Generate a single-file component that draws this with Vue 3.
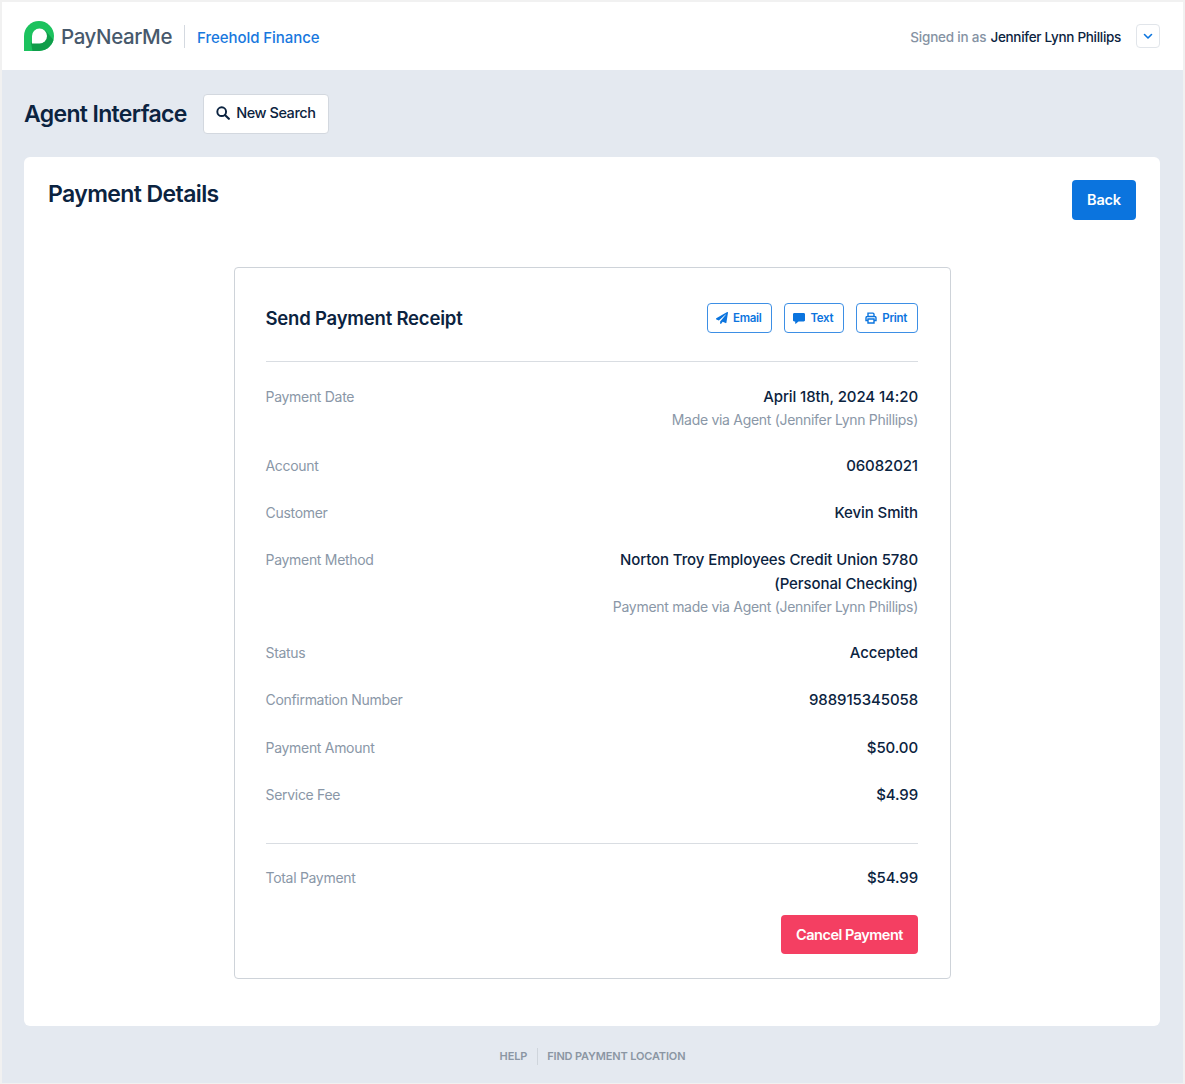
<script setup>
const rows = [
  { label: 'Payment Date', value: ['April 18th, 2024 14:20'], note: 'Made via Agent (Jennifer Lynn Phillips)' },
  { label: 'Account', value: ['06082021'] },
  { label: 'Customer', value: ['Kevin Smith'] },
  {
    label: 'Payment Method',
    value: ['Norton Troy Employees Credit Union 5780', '(Personal Checking)'],
    note: 'Payment made via Agent (Jennifer Lynn Phillips)'
  },
  { label: 'Status', value: ['Accepted'] },
  { label: 'Confirmation Number', value: ['988915345058'] },
  { label: 'Payment Amount', value: ['$50.00'] },
  { label: 'Service Fee', value: ['$4.99'] }
]
</script>

<template>
  <div class="page">
    <header class="topbar">
      <div class="brand">
        <svg class="logo" viewBox="0 0 30 30" width="30" height="30">
          <path d="M15 0a15 15 0 0 1 0 30H0V15A15 15 0 0 1 15 0z" fill="#1cc25e" />
          <path d="M21 9 29.500 19A15 15 0 0 1 15 30H8.500L7 22z" fill="#0f9d4a" />
          <path d="M15.500 7.500a7.500 7.500 0 0 1 0 15H8V15a7.500 7.500 0 0 1 7.500-7.500z" fill="#fff" />
        </svg>
        <span class="brand-name">PayNearMe</span>
        <span class="brand-sep"></span>
        <span class="merchant">Freehold Finance</span>
      </div>
      <div class="user">
        <span class="signed">Signed in as</span>
        <span class="user-name">Jennifer Lynn Phillips</span>
        <button class="user-toggle">
          <svg viewBox="0 0 12 12" width="12" height="12">
            <path d="M2.500 4.500 6 8l3.500-3.500" fill="none" stroke="#0b74de" stroke-width="1.600" stroke-linecap="round" stroke-linejoin="round" />
          </svg>
        </button>
      </div>
    </header>

    <div class="subbar">
      <h1>Agent Interface</h1>
      <button class="search-btn">
        <svg viewBox="0 0 16 16" width="14" height="14">
          <circle cx="6.500" cy="6.500" r="5" fill="none" stroke="#0b2340" stroke-width="2.200" />
          <path d="m10.500 10.500 4.200 4.200" stroke="#0b2340" stroke-width="2.400" stroke-linecap="round" />
        </svg>
        New Search
      </button>
    </div>

    <main class="panel">
      <div class="panel-head">
        <h2>Payment Details</h2>
        <button class="back-btn">Back</button>
      </div>

      <section class="receipt">
        <div class="receipt-head">
          <h3>Send Payment Receipt</h3>
          <div class="receipt-actions">
            <button class="action">
              <svg viewBox="0 0 512 512" width="12" height="12">
                <path fill="#0b74de" d="M476 3 12 271c-18 10-16 36 3 44l107 45 288-254c6-5 13 3 9 8L177 402v81c0 24 29 33 43 16l64-78 126 53c14 6 31-3 33-19L511 28c3-21-17-36-35-25z" />
              </svg>
              Email
            </button>
            <button class="action">
              <svg viewBox="0 0 12 12" width="12" height="12">
                <path fill="#0b74de" d="M1.300 1h9.400c.7 0 1.300.6 1.300 1.300v6c0 .7-.6 1.200-1.300 1.200H5.500L2.800 11.700c-.3.2-.6 0-.6-.3V9.500h-.9C.6 9.500 0 9 0 8.300v-6C0 1.600.6 1 1.300 1z" />
              </svg>
              Text
            </button>
            <button class="action">
              <svg viewBox="0 0 12 12" width="12" height="12">
                <path fill="none" stroke="#0b74de" stroke-width="1.400" d="M3 4.500V1.100h5l1 1v2.400M3 8.500H1V5.800c0-.7.6-1.300 1.300-1.300h7.400c.7 0 1.300.6 1.300 1.300v2.700H9M3 7h6v4H3z" />
              </svg>
              Print
            </button>
          </div>
        </div>

        <dl class="details">
          <div v-for="row in rows" :key="row.label" class="row">
            <dt>{{ row.label }}</dt>
            <dd>
              <span v-for="line in row.value" :key="line" class="value">{{ line }}</span>
              <span v-if="row.note" class="note">{{ row.note }}</span>
            </dd>
          </div>
        </dl>

        <div class="total">
          <span class="total-label">Total Payment</span>
          <span class="value">$54.99</span>
        </div>

        <div class="receipt-foot">
          <button class="cancel-btn">Cancel Payment</button>
        </div>
      </section>
    </main>

    <footer class="foot">
      <a>HELP</a>
      <span class="foot-sep"></span>
      <a>FIND PAYMENT LOCATION</a>
    </footer>
  </div>
</template>

<style>
html,
body {
  margin: 0;
  background: #fff;
}
</style>

<style scoped>
.page {
  box-sizing: border-box;
  width: 1185px;
  height: 1084px;
  border: 2px solid #f1f1f1;
  border-bottom-width: 1px;
  background: #e4e9f0;
  font-family: Inter, "Open Sans", sans-serif;
  color: #0b2340;
  overflow: hidden;
}

button {
  font-family: inherit;
  cursor: pointer;
}

.topbar {
  height: 68px;
  background: #fff;
  display: flex;
  align-items: center;
  justify-content: space-between;
  padding: 0 22px;
}

.brand {
  display: flex;
  align-items: center;
}

.brand-name {
  margin-left: 7px;
  font-size: 20.500px;
  font-weight: 500;
  color: #47596c;
  letter-spacing: -0.4px;
}

.brand-sep {
  width: 1px;
  height: 23px;
  background: #d4d9e0;
  margin: 0 12px;
}

.merchant {
  margin-top: 2px;
  font-size: 15px;
  font-weight: 500;
  letter-spacing: -0.05px;
  color: #1878de;
}

.user {
  display: flex;
  align-items: center;
  font-size: 13.500px;
}

.signed {
  padding-top: 2px;
  color: #8592a3;
  font-weight: 500;
  letter-spacing: -0.2px;
}

.user-name {
  padding-top: 2px;
  margin-left: 4px;
  font-weight: 500;
  letter-spacing: -0.3px;
}

.user-toggle {
  width: 24px;
  height: 24px;
  margin: 0 1px 0 15px;
  padding: 0;
  display: flex;
  align-items: center;
  justify-content: center;
  background: #fff;
  border: 1px solid #e1e5ea;
  border-radius: 4px;
}

.subbar {
  height: 87px;
  padding: 0 22px;
  display: flex;
  align-items: center;
  gap: 16px;
}

h1 {
  margin: 0;
  font-size: 23px;
  font-weight: 600;
  letter-spacing: -0.65px;
}

.search-btn {
  width: 126px;
  height: 40px;
  padding: 0 0 2px;
  display: flex;
  align-items: center;
  justify-content: center;
  gap: 6px;
  background: #fff;
  border: 1px solid #d3d8df;
  border-radius: 4px;
  font-size: 14.500px;
  font-weight: 500;
  letter-spacing: -0.45px;
  color: #0b2340;
}

.panel {
  margin: 0 23px 0 22px;
  height: 869px;
  box-sizing: border-box;
  background: #fff;
  border-radius: 6px;
  padding: 23px 24px;
}

.panel-head {
  display: flex;
  justify-content: space-between;
  align-items: flex-start;
  height: 87px;
}

h2 {
  margin: 0;
  font-size: 23px;
  font-weight: 600;
  line-height: 28px;
  letter-spacing: -0.6px;
}

.back-btn {
  width: 64px;
  height: 40px;
  padding: 0 0 1px;
  background: #0b74de;
  color: #fff;
  border: 0;
  border-radius: 4px;
  font-size: 14.500px;
  font-weight: 600;
  letter-spacing: -0.2px;
}

.receipt {
  box-sizing: border-box;
  width: 717px;
  height: 712px;
  margin: 0 auto;
  padding: 0 31.500px 0 31px;
  border: 1px solid #ced3d9;
  border-radius: 4px;
}

.receipt-head {
  height: 94px;
  display: flex;
  align-items: center;
  justify-content: space-between;
  padding-top: 8px;
  padding-bottom: 1px;
  box-sizing: border-box;
  border-bottom: 1px solid #d9dde2;
}

h3 {
  margin: 0;
  font-size: 18.500px;
  font-weight: 600;
  letter-spacing: -0.2px;
}

.receipt-actions {
  display: flex;
  gap: 12px;
}

.action {
  height: 30px;
  padding: 0 10px 1px 8px;
  display: flex;
  align-items: center;
  gap: 5px;
  background: #fff;
  border: 1px solid #3d8fe5;
  border-radius: 4px;
  color: #0b74de;
  font-size: 11.500px;
  font-weight: 600;
  letter-spacing: -0.3px;
}

.details {
  margin: 0;
  padding: 22.500px 0 35.900px;
  border-bottom: 1px solid #d9dde2;
}

.row {
  display: flex;
  justify-content: space-between;
  margin-bottom: 23.200px;
}

.row:last-child {
  margin-bottom: 0;
}

dt {
  font-size: 14px;
  line-height: 24px;
  letter-spacing: -0.3px;
  color: #8a97a7;
}

dd {
  margin: 0;
  display: flex;
  flex-direction: column;
  text-align: right;
}

.value {
  font-size: 15px;
  font-weight: 500;
  line-height: 24px;
  letter-spacing: -0.1px;
}

.note {
  font-size: 14px;
  line-height: 22px;
  letter-spacing: -0.3px;
  color: #8a97a7;
}

.total {
  display: flex;
  justify-content: space-between;
  margin-top: 22px;
}

.total-label {
  font-size: 14px;
  line-height: 24px;
  letter-spacing: -0.3px;
  color: #8a97a7;
}

.receipt-foot {
  display: flex;
  justify-content: flex-end;
  margin-top: 25px;
}

.cancel-btn {
  width: 137px;
  height: 39px;
  background: #f43f62;
  color: #fff;
  border: 0;
  border-radius: 4px;
  font-size: 14.500px;
  font-weight: 600;
  letter-spacing: -0.5px;
}

.foot {
  display: flex;
  justify-content: center;
  align-items: center;
  gap: 9.500px;
  height: 57px;
  padding-top: 3px;
  box-sizing: border-box;
  font-size: 11px;
  font-weight: 600;
  letter-spacing: -0.15px;
  color: #8b96a3;
}

.foot-sep {
  width: 1px;
  height: 17px;
  background: #cfd5dc;
}
</style>
